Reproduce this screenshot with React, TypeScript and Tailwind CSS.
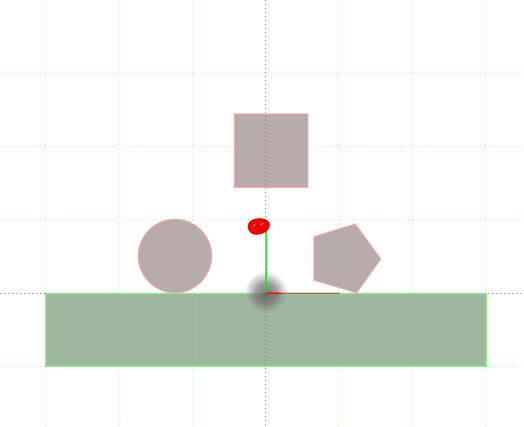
import React from 'react';

// grid lines snapped to pixel centres (1 world unit ≈ 73.3px)
const OX = 265.5;
const OY = 293.5;
const cols = [45.5, 118.5, 192.5, 338.5, 412.5, 485.5];
const rows = [73.5, 146.5, 219.5, 366.5];

const pentagon = [
  [314, 236.7],
  [355.3, 224],
  [380.7, 259],
  [356.7, 292.7],
  [314, 280.3],
];

export default function App() {
  return (
    <div className="w-[524px] h-[427px] bg-white overflow-hidden">
      <svg width={524} height={427} viewBox="0 0 524 427">
        <defs>
          <radialGradient id="shadow">
            <stop offset="0%" stopColor="#5a5a5a" stopOpacity="0.85" />
            <stop offset="50%" stopColor="#6a6a6a" stopOpacity="0.62" />
            <stop offset="80%" stopColor="#8a8a8a" stopOpacity="0.3" />
            <stop offset="100%" stopColor="#aaaaaa" stopOpacity="0" />
          </radialGradient>
        </defs>

        {/* grid */}
        <g stroke="#c0f4c0" strokeWidth={1} strokeDasharray="1 3">
          {cols.map((x) => (
            <line key={'c' + x} x1={x} y1={0} x2={x} y2={427} />
          ))}
          {rows.map((y) => (
            <line key={'r' + y} x1={0} y1={y} x2={524} y2={y} />
          ))}
        </g>
        <g stroke="#f08080" strokeWidth={1} strokeDasharray="1 3">
          <line x1={OX} y1={0} x2={OX} y2={427} />
          <line x1={0} y1={OY} x2={524} y2={OY} />
        </g>

        {/* ground */}
        <rect
          x={45.7}
          y={293.6}
          width={440.6}
          height={72.7}
          fill="rgb(64,112,64)"
          fillOpacity={0.5}
          stroke="#8ee88e"
          strokeWidth={1.5}
        />

        {/* box */}
        <rect
          x={234.5}
          y={114}
          width={73.3}
          height={73.3}
          fill="rgb(112,88,90)"
          fillOpacity={0.5}
          stroke="#f0a0a0"
          strokeOpacity={0.7}
          strokeWidth={1.5}
        />

        {/* circle */}
        <circle
          cx={175}
          cy={256}
          r={36.7}
          fill="rgb(112,88,90)"
          fillOpacity={0.5}
          stroke="#f0a0a0"
          strokeOpacity={0.7}
          strokeWidth={1.5}
        />
        <line x1={175} y1={256} x2={211.7} y2={256} stroke="#f0a0a0" strokeWidth={1.2} />

        {/* pentagon */}
        <polygon
          points={pentagon.map((p) => p.join(',')).join(' ')}
          fill="rgb(112,88,90)"
          fillOpacity={0.5}
          stroke="#f0a0a0"
          strokeOpacity={0.7}
          strokeWidth={1.5}
        />

        {/* origin marker */}
        <circle cx={266.3} cy={293.3} r={22} fill="url(#shadow)" />
        <line x1={266.2} y1={220.7} x2={266.2} y2={293.3} stroke="#22dd22" strokeWidth={1.5} />
        <line x1={266.2} y1={293.3} x2={340} y2={293.3} stroke="#a04040" strokeWidth={1} />
        <line x1={266.2} y1={293.3} x2={281} y2={293.3} stroke="#ee1111" strokeWidth={1.5} />

        {/* red scribble */}
        <g fill="none" stroke="#ee0000" strokeWidth={3} strokeLinecap="round">
          <ellipse cx={258.3} cy={226.5} rx={9} ry={6.2} fill="#ee0000" />
          <path d="M250 224 C253 218.5 265 218.5 268 223 C270 229 262 234 255 233 C249.5 232 248.5 227 251 223.5" />
        </g>
        <g stroke="#ffffff" strokeWidth={0.8} strokeLinecap="round">
          <line x1={253} y1={226} x2={255} y2={224.5} />
          <line x1={261} y1={224.5} x2={263} y2={223.5} />
        </g>
      </svg>
    </div>
  );
}
